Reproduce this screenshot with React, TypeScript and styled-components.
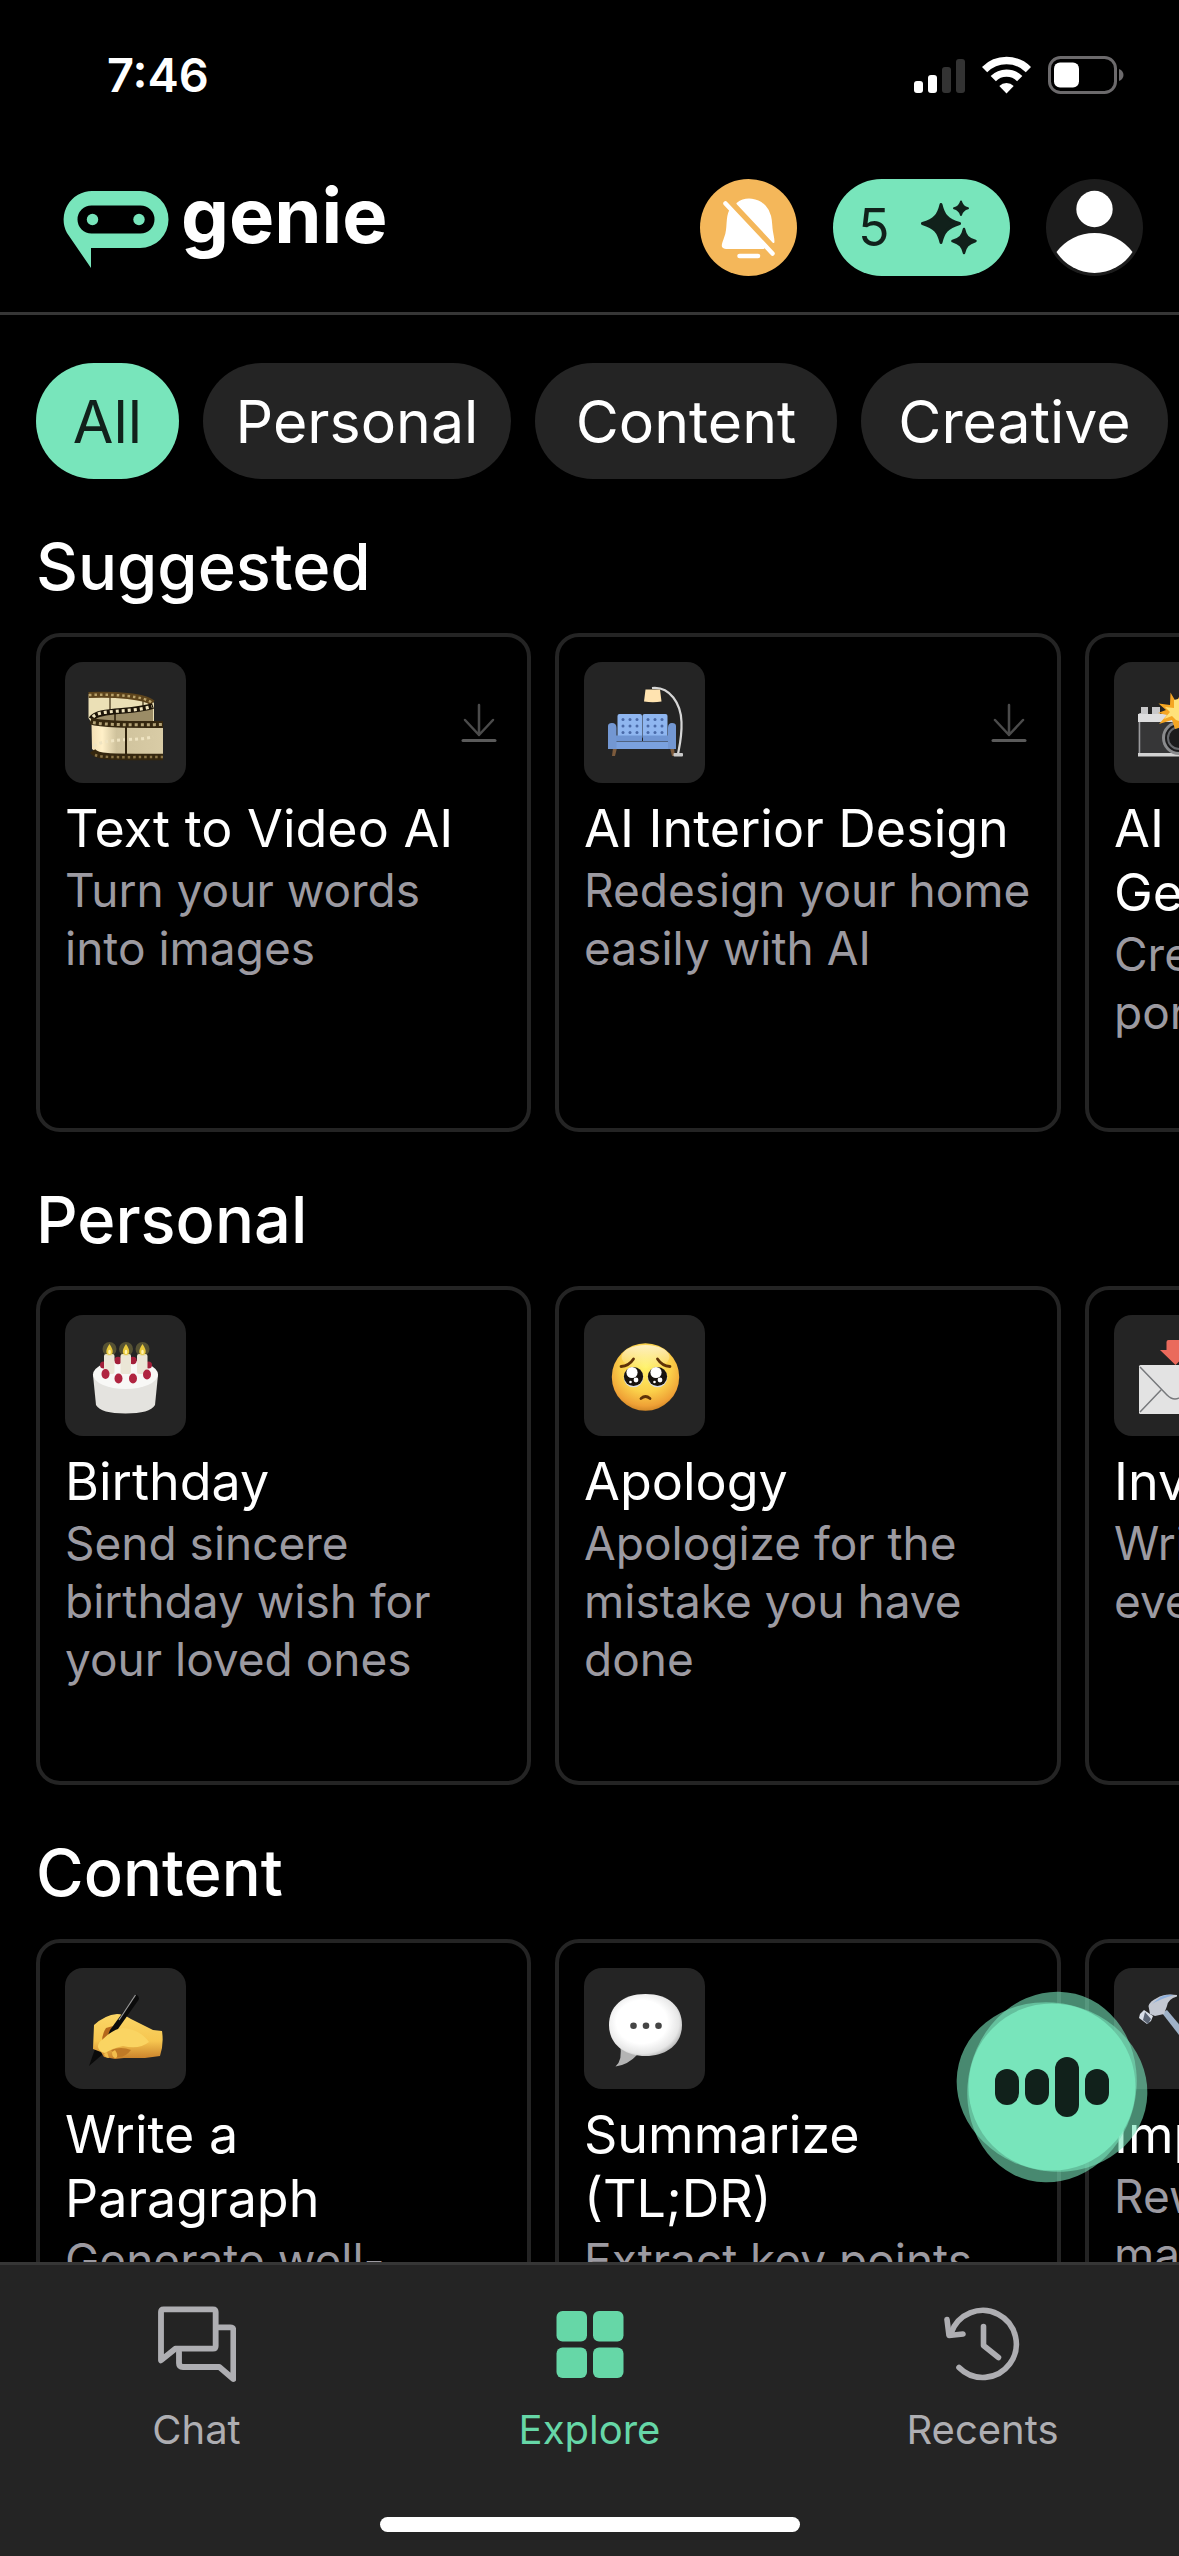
import React, { ReactNode } from "react";
import styled, { createGlobalStyle, css } from "styled-components";

const color = {
  mint: "#78e5bb",
  mintDeep: "#66d7a7",
  ink: "#11211b",
  surface: "#242424",
  line: "#363636",
  muted: "#9c9aa1",
  tab: "#aeaeb2",
};

const GlobalStyle = createGlobalStyle`
  *, *::before, *::after { box-sizing: border-box; }
  body {
    margin: 0;
    background: #000;
    color: #fff;
    font-family: Inter, "Liberation Sans", sans-serif;
  }
  h1, h2, h3, p { margin: 0; font-weight: 400; }
  button { font: inherit; color: inherit; border: 0; padding: 0; cursor: pointer; }
  a { color: inherit; text-decoration: none; }
  svg { display: block; flex: none; }
`;

const Screen = styled.div`
  position: relative;
  display: flex;
  flex-direction: column;
  height: 100vh;
  overflow: hidden;
`;

const StatusBar = styled.div`
  display: flex;
  justify-content: space-between;
  align-items: center;
  padding: 43px 55px 36px 107px;
`;

const Clock = styled.time`
  font-size: 47px;
  line-height: 64px;
  font-weight: 600;
`;

const StatusIcons = styled.div`
  display: flex;
  align-items: center;
  gap: 17px;
`;

const Header = styled.header`
  display: flex;
  align-items: center;
  justify-content: space-between;
  padding: 36px 36px 36px 63px;
  border-bottom: 3px solid ${color.line};
`;

const Brand = styled.a`
  display: flex;
  align-items: center;
  gap: 12px;
  height: 97px;
`;

const BrandName = styled.span`
  font-size: 76px;
  line-height: 72px;
  font-weight: 700;
  padding-bottom: 25px;
`;

const Actions = styled.div`
  display: flex;
  gap: 36px;
`;

const RoundButton = styled.button<{ $tone: string }>`
  width: 97px;
  height: 97px;
  border-radius: 50%;
  background: ${(p) => p.$tone};
`;

const CreditsButton = styled.button`
  display: flex;
  align-items: center;
  justify-content: space-between;
  width: 177px;
  height: 97px;
  padding: 0 33px 0 25px;
  border-radius: 49px;
  background: ${color.mint};
  color: ${color.ink};
  font-size: 52px;
`;

const Feed = styled.main`
  flex: 1;
  min-height: 0;
  overflow: hidden;
  padding: 48px 0 0 36px;
  display: flex;
  flex-direction: column;
  gap: 48px;
`;

const Chips = styled.div`
  display: grid;
  grid-template-columns: 143px 308px 302px 307px;
  flex: none;
  gap: 24px;
`;

const Chip = styled.button<{ $active?: boolean }>`
  height: 116px;
  border-radius: 58px;
  font-size: 59px;
  background: ${color.surface};
  ${(p) =>
    p.$active &&
    css`
      background: ${color.mint};
      color: ${color.ink};
    `}
`;

const Section = styled.section`
  flex: none;
`;

const SectionTitle = styled.h2`
  font-size: 65px;
  line-height: 80px;
  font-weight: 500;
  margin-bottom: 26px;
`;

const CardRow = styled.div`
  display: grid;
  grid-template-columns: 495px 506px 495px;
  gap: 24px;
`;

const Card = styled.a`
  display: block;
  height: 499px;
  padding: 25px;
  border: 4px solid ${color.surface};
  border-radius: 24px;
`;

const CardTop = styled.div`
  display: flex;
  align-items: center;
  justify-content: space-between;
  padding-right: 5px;
  margin-bottom: 14px;
`;

const Tile = styled.span`
  width: 121px;
  height: 121px;
  border-radius: 18px;
  background: ${color.surface};
`;

const CardTitle = styled.h3`
  font-size: 52px;
  line-height: 64px;
`;

const CardText = styled.p`
  font-size: 46px;
  line-height: 58px;
  color: ${color.muted};
`;

const TabBar = styled.nav`
  flex: none;
  background: ${color.surface};
  border-top: 3px solid ${color.line};
  padding-bottom: 24px;
`;

const Tabs = styled.div`
  display: grid;
  grid-template-columns: repeat(3, 1fr);
  padding: 41px 0 63px;
`;

const Tab = styled.a<{ $active?: boolean }>`
  display: flex;
  flex-direction: column;
  align-items: center;
  gap: 22px;
  font-size: 40px;
  line-height: 48px;
  color: ${(p) => (p.$active ? color.mintDeep : color.tab)};
`;

const HomeIndicator = styled.div`
  width: 420px;
  height: 15px;
  margin: 0 auto;
  border-radius: 8px;
  background: #fff;
`;

const VoiceButton = styled.button`
  position: absolute;
  right: 30px;
  bottom: 372px;
  background: none;
`;

/* ---------- chrome icons ---------- */

const Signal = () => (
  <svg width="51" height="38" viewBox="0 0 51 38" aria-hidden="true">
    <rect x="0" y="25" width="9" height="12" rx="3" fill="#fff" />
    <rect x="14" y="19" width="9" height="18" rx="3" fill="#fff" />
    <rect x="28" y="11" width="9" height="26" rx="3" fill="#333" />
    <rect x="42" y="3" width="9" height="34" rx="3" fill="#333" />
  </svg>
);

const Wifi = () => (
  <svg width="49" height="38" viewBox="0 0 49 38" aria-hidden="true">
    <g fill="none" stroke="#fff" strokeWidth="7.4">
      <path d="M2.6 13.6a31 31 0 0 1 43.8 0" />
      <path d="M11.3 22.6a18.6 18.6 0 0 1 26.4 0" />
    </g>
    <path d="M24.500 37.500l-7.200-7.400a10.200 10.200 0 0 1 14.400 0z" fill="#fff" />
  </svg>
);

const Battery = () => (
  <svg width="76" height="38" viewBox="0 0 76 38" aria-hidden="true">
    <rect x="1.500" y="1.500" width="66" height="35" rx="11" fill="none" stroke="#6c6a6c" strokeWidth="3" />
    <rect x="6" y="6.500" width="25" height="25" rx="6" fill="#fff" />
    <path d="M71 13c6 2 6 10 0 12z" fill="#6c6a6c" />
  </svg>
);

const Logo = () => (
  <svg width="106" height="82" viewBox="0 -4 106 82" aria-hidden="true">
    <path
      fillRule="evenodd"
      fill={color.mint}
      d="M29 0H77A28.500 28.500 0 0 1 77 57H28V77L4 42A28.500 28.500 0 0 1 29 0ZM28.500 14.500A14 14 0 0 0 28.500 42.500H77.500A14 14 0 0 0 77.500 14.500Z"
    />
    <circle cx="29.500" cy="28.500" r="5.700" fill={color.mint} />
    <circle cx="76" cy="28.500" r="5.700" fill={color.mint} />
  </svg>
);

const BellOff = () => (
  <svg width="97" height="97" viewBox="0 0 97 97" aria-hidden="true">
    <path
      fill="#fff"
      stroke="#fff"
      strokeWidth="2"
      strokeLinejoin="round"
      d="M30 32C27 38 28 44 27 51C26.500 57 24 61 23 65Q22 69 26 69H63.500ZM37.500 24.500C46 18 58 20 65 27.500C71 34 71 42 71.500 49C72 55 73.500 58 73.500 63Z"
    />
    <path d="M25.500 24.500L72.500 74.500" stroke="#fff" strokeWidth="4.500" strokeLinecap="round" />
    <path d="M39.500 77H58" stroke="#fff" strokeWidth="4.500" strokeLinecap="round" />
  </svg>
);

const Sparkles = () => (
  <svg width="56" height="56" viewBox="0 0 56 56" fill="currentColor" stroke="currentColor" strokeLinejoin="round" aria-hidden="true">
    <path strokeWidth="3" d="M20 4.500C22.500 15 26 20 38.500 23.500C26 27.500 22.500 32 20 42.500C17.500 32 14 27.500 1.500 23.500C14 20 17.500 15 20 4.500Z" />
    <path strokeWidth="2.500" d="M43 29C44.500 36 47 39 54.500 41C47 43.500 44.500 46 43 53C41.500 46 39 43.500 31.500 41C39 39 41.500 36 43 29Z" />
    <path strokeWidth="2" d="M40 1.500C41 5.500 42.500 7.300 47 8.300C42.500 9.500 41 11.500 40 15C39 11.500 37.500 9.500 33 8.300C37.500 7.300 39 5.500 40 1.500Z" />
  </svg>
);

const Person = () => (
  <svg width="97" height="97" viewBox="0 0 97 97" fill="#fff" aria-hidden="true">
    <circle cx="48.500" cy="30" r="18.200" />
    <path d="M10.500 73A47.500 47.500 0 0 1 86.500 73A45 45 0 0 1 10.500 73Z" />
  </svg>
);

const Download = () => (
  <svg width="36" height="40" viewBox="0 0 36 40" fill="none" strokeLinecap="round" strokeLinejoin="round" aria-hidden="true">
    <path d="M18 2V32M4 17L18 32L32 17" stroke="#4b4b4b" strokeWidth="2.500" />
    <path d="M2 37.500H34" stroke="#5a5a5a" strokeWidth="3" />
  </svg>
);

const ChatIcon = () => (
  <svg width="78" height="78" viewBox="55 52 234 234" fill="none" stroke="currentColor" strokeWidth="17.500" strokeLinejoin="round" strokeLinecap="round" aria-hidden="true">
    <path d="M64 215V70Q64 62 72 62H220Q228 62 228 70V172Q228 180 220 180H107Z" />
    <path d="M237 116H272Q281 116 281 125V271L239 235H130Q118 235 118 224V190" />
  </svg>
);

const ExploreIcon = () => (
  <svg width="78" height="78" viewBox="0 0 78 78" fill="currentColor" aria-hidden="true">
    <rect x="5.500" y="5" width="30.500" height="30.500" rx="6" />
    <rect x="42" y="5" width="30.500" height="30.500" rx="6" />
    <rect x="5.500" y="41.500" width="30.500" height="30.500" rx="6" />
    <rect x="42" y="41.500" width="30.500" height="30.500" rx="6" />
  </svg>
);

const RecentsIcon = () => (
  <svg width="78" height="78" viewBox="0 0 78 78" fill="none" stroke="currentColor" strokeWidth="5.600" strokeLinecap="round" strokeLinejoin="round" aria-hidden="true">
    <path d="M15 61.500A33.500 33.500 0 1 0 7 27.500" />
    <path d="M3 13.500L5 29.500L19 28" />
    <path d="M39.500 20.500V39.500L54.500 51.500" />
  </svg>
);

const VoiceIcon = () => (
  <svg width="194" height="194" viewBox="-97 -97 194 194" aria-hidden="true">
    <g fill={color.mint} fillOpacity="0.6">
      <ellipse rx="84" ry="96" transform="rotate(14)" />
      <ellipse rx="96" ry="84" transform="rotate(14)" />
    </g>
    <circle r="83.500" fill={color.mint} />
    <g fill={color.ink}>
      <rect x="-57" y="-18" width="24" height="36" rx="12" />
      <rect x="-27" y="-18" width="24" height="36" rx="12" />
      <rect x="3" y="-30" width="24" height="60" rx="12" />
      <rect x="33" y="-18" width="24" height="36" rx="12" />
    </g>
  </svg>
);

/* ---------- tile pictures, drawn on a 121 x 121 field ---------- */

const Picture = ({ children }: { children: ReactNode }) => (
  <svg width="121" height="121" viewBox="0 0 121 121" aria-hidden="true">
    {children}
  </svg>
);

const Film = () => (
  <Picture>
    <defs>
      <linearGradient id="film" x1="0" x2="1">
        <stop offset="0" stopColor="#f3dfb4" />
        <stop offset="0.15" stopColor="#fff0c8" />
        <stop offset="0.35" stopColor="#cfc29c" />
        <stop offset="1" stopColor="#d9cca6" />
      </linearGradient>
    </defs>
    <path d="M23.500 32C50 31 82 33 89 41V60H26L23.500 56Z" fill="#ebe0b6" />
    <path d="M45 34V50M78 36V46" stroke="#3a2a10" strokeWidth="1.200" />
    <path d="M26 58C31 50 60 50 88 45V60H27Z" fill="#9b8c66" />
    <path d="M50 52V60" stroke="#2a1d0a" strokeWidth="1.500" />
    <path d="M23.500 33C50 32 80 34 87.500 41" fill="none" stroke="#5d441c" strokeWidth="6" />
    <path d="M24 33C50 32 80 34 87 41" fill="none" stroke="#b9a26b" strokeWidth="2.500" strokeDasharray="2.500 3" />
    <path d="M26.500 57C32 47 66 51 88 44" fill="none" stroke="#1d1508" strokeWidth="6" />
    <path d="M28 55C34 47 66 51 87 44.500" fill="none" stroke="#efe3bd" strokeWidth="3.200" strokeDasharray="3 3" />
    <path d="M26.500 62C50 66 80 65 98 65V92H34L27 87Z" fill="url(#film)" />
    <path d="M29 84C40 76 70 79 88 75" fill="none" stroke="#efe4c2" strokeWidth="3" strokeDasharray="3 3" />
    <path d="M61 65V93" stroke="#2f220d" strokeWidth="2" />
    <path d="M25.500 59C38 63 70 62.500 98 62.500" fill="none" stroke="#35270f" strokeWidth="7" />
    <path d="M28 60.500C40 63 70 63 98 62.500" fill="none" stroke="#b3a276" strokeWidth="3" strokeDasharray="3 3" />
    <path d="M27.500 89C32 96 50 95 98 95" fill="none" stroke="#35270f" strokeWidth="6.500" />
    <path d="M30 93C38 96 60 95 98 95" fill="none" stroke="#8a7446" strokeWidth="2.500" strokeDasharray="2.500 3" />
  </Picture>
);

const Couch = () => (
  <Picture>
    <path d="M68 26C86 24 97 42 97.500 60C98 74 96 82 94 92" fill="none" stroke="#d6d6d6" strokeWidth="2.200" />
    <path d="M61.500 27.500H76L77.500 39.500Q69 41 60 39.500Z" fill="#ffe3b0" />
    <path d="M29 86L28 94H31L33 86ZM86 86L88 94H91L90 86Z" fill="#7b5a3c" />
    <rect x="89.500" y="91" width="9.500" height="3.500" rx="1" fill="#c9c9c9" />
    <rect x="33.500" y="52" width="24.500" height="25" rx="2" fill="#8fb6f0" />
    <rect x="58.500" y="52" width="25" height="25" rx="2" fill="#8fb6f0" />
    <g fill="#4a6aa8">
      {[39, 46, 53, 64, 71, 78].flatMap((x) =>
        [57.5, 64, 70.5].map((y) => <circle key={`${x}-${y}`} cx={x} cy={y} r="1.5" />)
      )}
    </g>
    <path d="M32 73.500H58V79H32ZM59 73.500H85V79H59Z" fill="#6f95d3" />
    <rect x="31" y="79.500" width="55" height="7.500" fill="#7aa1df" />
    <path d="M24 64Q24 61 28 61Q32.500 61 32.500 66V87H24ZM92 64Q92 61 88 61Q84 61 84 66V87H92Z" fill="#7397d2" />
  </Picture>
);

const Camera = () => (
  <Picture>
    <path d="M27 45H34V52H38V45H46V52H70V59H24V54Q24 51 27 51Z" fill="#c8c8ca" />
    <path d="M24 52H97V60H24Z" fill="#dededf" />
    <path d="M24 60H97V91H24Z" fill="#363637" />
    <path d="M25.500 60V94" stroke="#9a9a9c" strokeWidth="1.500" />
    <path d="M24 91H97V94.500H24Z" fill="#d2d2d2" />
    <circle cx="65" cy="76" r="17" fill="#8a8b8d" />
    <circle cx="65" cy="76" r="14" fill="#1b1b1c" />
    <circle cx="65" cy="76" r="11" fill="none" stroke="#66686c" strokeWidth="2" />
    <path d="M56.500 30.500L62 40L68 30L70 64L61 67L58 58L45 62L53 53L44 51L52 48L44.500 41.500L56 43Z" fill="#f5a623" />
    <path d="M60 38L68 36V60L62 58L58 54L50 57L56 50L51 45L60 46Z" fill="#ffe27a" />
  </Picture>
);

const Cake = () => (
  <Picture>
    <path d="M28 60L31 90Q36 98.500 60.500 98.500Q85 98.500 90 90L93 60Z" fill="#e4e3df" />
    <ellipse cx="60.500" cy="59.500" rx="32.500" ry="14.500" fill="#f8f8f6" />
    <g fill="#a31f3a">
      <circle cx="38.500" cy="50" r="3.500" />
      <circle cx="53" cy="45.500" r="3.700" />
      <circle cx="68" cy="45.500" r="3.700" />
      <circle cx="83.500" cy="50" r="3.500" />
    </g>
    <g fill="#ebe6d6">
      <rect x="39" y="39" width="10.500" height="20" rx="2" />
      <rect x="55.500" y="39" width="10.500" height="20" rx="2" />
      <rect x="72" y="39" width="10.500" height="20" rx="2" />
    </g>
    {[44.5, 61, 77.5].map((x) => (
      <g key={x}>
        <circle cx={x} cy="34" r="7" fill="#d9c95a" fillOpacity="0.28" />
        <path d={`M${x} 29C${x + 5} 36 ${x + 3.5} 40 ${x} 40C${x - 3.5} 40 ${x - 5} 36 ${x} 29Z`} fill="#e9c93c" />
        <ellipse cx={x} cy="37" rx="1.300" ry="2.200" fill="#fff4b0" />
      </g>
    ))}
    <g fill="#b02440">
      <ellipse cx="40.500" cy="59" rx="4" ry="5" />
      <ellipse cx="53.500" cy="63.500" rx="4" ry="5" />
      <ellipse cx="68" cy="63.500" rx="4" ry="5" />
      <ellipse cx="82" cy="59.500" rx="4" ry="5" />
    </g>
  </Picture>
);

const Pleading = () => (
  <Picture>
    <defs>
      <radialGradient id="face" cx="0.5" cy="0.35" r="0.68">
        <stop offset="0" stopColor="#fff36a" />
        <stop offset="0.55" stopColor="#fbd04a" />
        <stop offset="0.85" stopColor="#efa136" />
        <stop offset="1" stopColor="#c87f22" />
      </radialGradient>
      <linearGradient id="shine" x1="0" x2="0" y1="0" y2="1">
        <stop offset="0" stopColor="#fff" stopOpacity="0.65" />
        <stop offset="1" stopColor="#fff" stopOpacity="0" />
      </linearGradient>
    </defs>
    <circle cx="61.500" cy="62" r="33.700" fill="url(#face)" />
    <ellipse cx="61.500" cy="42" rx="24" ry="12" fill="url(#shine)" />
    {[49.5, 73.5].map((x) => (
      <g key={x}>
        <circle cx={x} cy="62.500" r="9.800" fill="#d8dce0" />
        <circle cx={x} cy="61.500" r="9.600" fill="#17130f" />
        <circle cx={x - 1.5} cy="57.500" r="5.600" fill="#fff" />
        <circle cx={x + 2.5} cy="65" r="2.400" fill="#fff" />
        <circle cx={x - 3} cy="67" r="1.300" fill="#fff" />
      </g>
    ))}
    <path d="M37 51.500Q45 51 49.500 44M86 51.500Q78 51 73.500 44M57 83.500Q61.500 79.500 66 83.500" fill="none" stroke="#5f3208" strokeWidth="2.800" strokeLinecap="round" />
  </Picture>
);

const Envelope = () => (
  <Picture>
    <rect x="25" y="50" width="72" height="49" rx="1.500" fill="#e3e3e3" />
    <path d="M26 97L47 75M26 52L53 80Q61 88 69 80L96 52" fill="none" stroke="#77797c" strokeWidth="1.500" />
    <path d="M52.500 27Q52.500 25 54.500 25H68Q70 25 70 27V35H76.500L61.500 50L46 35H52.500Z" fill="#ea6a5c" />
  </Picture>
);

const Writing = () => (
  <Picture>
    <defs>
      <linearGradient id="hand" x1="0" x2="0" y1="0" y2="1">
        <stop offset="0" stopColor="#fbd666" />
        <stop offset="0.6" stopColor="#f6c650" />
        <stop offset="1" stopColor="#c9802a" />
      </linearGradient>
    </defs>
    <path d="M24 98L30 81L38 86Z" fill="#0a0a0a" />
    <path d="M28 81L29 57Q40 47 52 46Q58 46 66 51L88 62L97 63Q99 76 95 88L80 90H59L50 91L45 90L39 89L36 84Z" fill="url(#hand)" />
    <path d="M46 82Q56 78 66 82Q60 90 52 89Z" fill="#c07a26" />
    <path d="M41 60L48 58L42 69L37 74Q37 66 41 60Z" fill="#b4671c" />
    <path d="M71 26.500Q75 28 73.500 32L48 68L40 75L45 62Z" fill="#0b0b0b" />
    <path d="M70.500 27L54 52" stroke="#9b9b9b" strokeWidth="1.200" />
    <path d="M33 79Q33 74 38 71Q48 61 58 60Q76 62 84 74Q74 82 58 78Q48 80 40 85Q34 84 33 79Z" fill="#fad462" />
    <path d="M39 86Q40 90 44 90L42 84ZM47 84Q47 90 51 90Q54 88 50 82Z" fill="#f2bd4c" />
  </Picture>
);

const Bubble = () => (
  <Picture>
    <defs>
      <radialGradient id="bubble" cx="0.45" cy="0.45" r="0.58">
        <stop offset="0.6" stopColor="#fff" />
        <stop offset="0.88" stopColor="#e6e6e6" />
        <stop offset="1" stopColor="#b9b9b9" />
      </radialGradient>
    </defs>
    <path d="M36 76Q39 92 31.500 98.500Q44 97 54 86Z" fill="#b4b4b4" />
    <path d="M61.500 26C85 26 98 39 98 57C98 75 84 88 61.500 88C39 88 25 75 25 57C25 39 38 26 61.500 26Z" fill="url(#bubble)" />
    <g fill="#454545">
      <circle cx="49.500" cy="57.700" r="3.300" />
      <circle cx="62" cy="57.700" r="3.300" />
      <circle cx="74.500" cy="57.700" r="3.300" />
    </g>
  </Picture>
);

const Hammer = () => (
  <Picture>
    <path d="M48 45L53 42L92 88Q93 95 86 94Z" fill="#9fb2c8" />
    <path d="M63 27Q50 25 43 30Q36 33 34.500 38L36 46L41 48L50 46L53 38Q54 31 63 28.500Z" fill="#c3c8d2" />
    <path d="M60 27Q50 26 44 31L38 36Q46 31 60 27Z" fill="#8fb0dc" />
    <path d="M26 46L30 42L39 48L37 53L33 56L25 50Z" fill="#d9dfe8" />
    <path d="M31 44L37 51L34 56L29 52Z" fill="#5b6474" />
  </Picture>
);

/* ---------- content ---------- */

type Item = { title: string; text: string; art: ReactNode; download?: boolean };

const sections: { name: string; items: Item[] }[] = [
  {
    name: "Suggested",
    items: [
      { title: "Text to Video AI", text: "Turn your words into images", art: <Film />, download: true },
      { title: "AI Interior Design", text: "Redesign your home easily with AI", art: <Couch />, download: true },
      { title: "AI Portrait Generator", text: "Create stunning portraits", art: <Camera />, download: true },
    ],
  },
  {
    name: "Personal",
    items: [
      { title: "Birthday", text: "Send sincere birthday wish for your loved ones", art: <Cake /> },
      { title: "Apology", text: "Apologize for the mistake you have done", art: <Pleading /> },
      { title: "Invitation", text: "Write invites for every event", art: <Envelope /> },
    ],
  },
  {
    name: "Content",
    items: [
      { title: "Write a Paragraph", text: "Generate well-written paragraphs", art: <Writing /> },
      { title: "Summarize (TL;DR)", text: "Extract key points from long text", art: <Bubble /> },
      { title: "Improve", text: "Rewrite text to make it better", art: <Hammer /> },
    ],
  },
];

const filters = ["All", "Personal", "Content", "Creative"];

export default function App() {
  return (
    <>
      <GlobalStyle />
      <Screen>
        <StatusBar>
          <Clock>7:46</Clock>
          <StatusIcons>
            <Signal />
            <Wifi />
            <Battery />
          </StatusIcons>
        </StatusBar>

        <Header>
          <Brand href="#home">
            <Logo />
            <BrandName>genie</BrandName>
          </Brand>
          <Actions>
            <RoundButton $tone="#f4b75a" aria-label="Notifications off">
              <BellOff />
            </RoundButton>
            <CreditsButton>
              5
              <Sparkles />
            </CreditsButton>
            <RoundButton $tone="#1c1c1c" aria-label="Profile">
              <Person />
            </RoundButton>
          </Actions>
        </Header>

        <Feed>
          <Chips>
            {filters.map((name, i) => (
              <Chip key={name} $active={i === 0} aria-pressed={i === 0}>
                {name}
              </Chip>
            ))}
          </Chips>

          {sections.map((section) => (
            <Section key={section.name}>
              <SectionTitle>{section.name}</SectionTitle>
              <CardRow>
                {section.items.map((item) => (
                  <Card key={item.title} href="#tool">
                    <CardTop>
                      <Tile>{item.art}</Tile>
                      {item.download && <Download />}
                    </CardTop>
                    <CardTitle>{item.title}</CardTitle>
                    <CardText>{item.text}</CardText>
                  </Card>
                ))}
              </CardRow>
            </Section>
          ))}
        </Feed>

        <TabBar>
          <Tabs>
            <Tab href="#chat">
              <ChatIcon />
              Chat
            </Tab>
            <Tab href="#explore" $active aria-current="page">
              <ExploreIcon />
              Explore
            </Tab>
            <Tab href="#recents">
              <RecentsIcon />
              Recents
            </Tab>
          </Tabs>
          <HomeIndicator />
        </TabBar>

        <VoiceButton aria-label="Voice assistant">
          <VoiceIcon />
        </VoiceButton>
      </Screen>
    </>
  );
}
